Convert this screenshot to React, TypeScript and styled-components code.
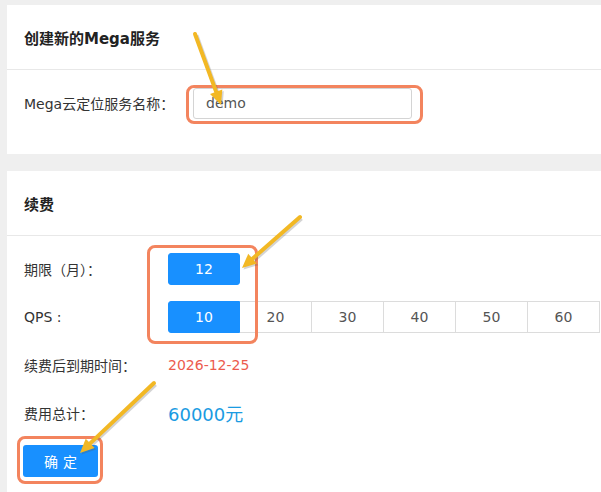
import React from 'react';
import styled, { createGlobalStyle } from 'styled-components';

const GlobalStyle = createGlobalStyle`
  html, body {
    margin: 0;
    padding: 0;
    background: #efefef;
  }
  * {
    box-sizing: border-box;
  }
`;

const FONT = `"DejaVu Sans", "Noto Sans CJK SC", sans-serif`;
const ORANGE = '#f3845e';
const ARROW = '#f2b824';

const Page = styled.div`
  position: relative;
  width: 601px;
  height: 492px;
  overflow: hidden;
  padding: 5px 0 0 7px;
  font-family: ${FONT};
  color: #333;
`;

const Card = styled.section<{ $gap?: number }>`
  width: 700px;
  background: #fff;
  margin-top: ${(p) => p.$gap ?? 0}px;
`;

const CardHeader = styled.header`
  height: 65px;
  display: flex;
  align-items: center;
  padding: 0 17px;
  border-bottom: 1px solid #e8e8e8;
  font-size: 15px;
  font-weight: 700;
  color: #222;
`;

const CardBody = styled.div<{ $bottom: number }>`
  padding: 17px 17px ${(p) => p.$bottom}px;
  display: flex;
  flex-direction: column;
  gap: 16px;
`;

const FormRow = styled.div`
  display: flex;
  align-items: center;
  min-height: 32px;
`;

const Label = styled.span<{ $width: number }>`
  width: ${(p) => p.$width}px;
  flex-shrink: 0;
  font-size: 14px;
  color: #333;
`;

const TextInput = styled.input`
  width: 219px;
  height: 31px;
  border: 1px solid #d4d4d4;
  border-radius: 3px;
  padding: 0 12px;
  font-family: ${FONT};
  font-size: 14px;
  color: #555;
  outline: none;
  background: #fff;
`;

const OptionGroup = styled.div`
  display: flex;
`;

const Option = styled.button<{ $active?: boolean; $single?: boolean }>`
  width: 72px;
  height: 32px;
  flex-shrink: 0;
  font-family: ${FONT};
  font-size: 14px;
  cursor: pointer;
  padding: 0;
  color: ${(p) => (p.$active ? '#fff' : '#555')};
  background: ${(p) => (p.$active ? '#1890ff' : '#fff')};
  border: 1px solid ${(p) => (p.$active ? '#1890ff' : '#dcdcdc')};
  border-left-width: ${(p) => (p.$active || p.$single ? 1 : 0)}px;
  border-radius: ${(p) => (p.$single ? '3px' : p.$active ? '3px 0 0 3px' : '0')};
`;

const DateValue = styled.span`
  font-size: 14px;
  color: #ec5b4e;
`;

const Price = styled.span`
  font-size: 18px;
  color: #1a9be2;
`;

const ConfirmButton = styled.button`
  width: 75px;
  height: 32px;
  margin-left: -1px;
  border: none;
  border-radius: 3px;
  background: #1890ff;
  color: #fff;
  font-family: ${FONT};
  font-size: 14px;
  letter-spacing: 5px;
  text-indent: 5px;
  cursor: pointer;
`;

const Highlight = styled.div`
  position: absolute;
  border: 3px solid ${ORANGE};
  border-radius: 8px;
  pointer-events: none;
`;

const Overlay = styled.svg`
  position: absolute;
  left: 0;
  top: 0;
  pointer-events: none;
`;

type Pt = [number, number];

const arrowHead = (tail: Pt, tip: Pt, len = 14, half = 6.5) => {
  const dx = tip[0] - tail[0];
  const dy = tip[1] - tail[1];
  const d = Math.hypot(dx, dy);
  const ux = dx / d;
  const uy = dy / d;
  const bx = tip[0] - ux * len;
  const by = tip[1] - uy * len;
  return {
    base: [bx, by] as Pt,
    points: `${tip[0]},${tip[1]} ${bx - uy * half},${by + ux * half} ${bx + uy * half},${by - ux * half}`,
  };
};

const Arrow: React.FC<{ tail: Pt; tip: Pt }> = ({ tail, tip }) => {
  const head = arrowHead(tail, tip);
  return (
    <g>
      <g transform="translate(1.5,1.5)" opacity="0.25">
        <line x1={tail[0]} y1={tail[1]} x2={head.base[0]} y2={head.base[1]} stroke="#555" strokeWidth="4" />
        <polygon points={head.points} fill="#555" />
      </g>
      <line x1={tail[0]} y1={tail[1]} x2={head.base[0]} y2={head.base[1]} stroke={ARROW} strokeWidth="4" strokeLinecap="round" />
      <polygon points={head.points} fill={ARROW} />
    </g>
  );
};

const qpsOptions = [10, 20, 30, 40, 50, 60];

const App: React.FC = () => {
  return (
    <Page>
      <GlobalStyle />
      <Card>
        <CardHeader>创建新的Mega服务</CardHeader>
        <CardBody $bottom={35}>
          <FormRow>
            <Label $width={169}>Mega云定位服务名称：</Label>
            <TextInput defaultValue="demo" readOnly />
          </FormRow>
        </CardBody>
      </Card>

      <Card $gap={17}>
        <CardHeader>续费</CardHeader>
        <CardBody $bottom={20}>
          <FormRow>
            <Label $width={144}>期限（月）：</Label>
            <Option $active $single>12</Option>
          </FormRow>
          <FormRow>
            <Label $width={144}>QPS :</Label>
            <OptionGroup>
              {qpsOptions.map((q, i) => (
                <Option key={q} $active={i === 0}>
                  {q}
                </Option>
              ))}
            </OptionGroup>
          </FormRow>
          <FormRow>
            <Label $width={144}>续费后到期时间：</Label>
            <DateValue>2026-12-25</DateValue>
          </FormRow>
          <FormRow>
            <Label $width={144}>费用总计：</Label>
            <Price>60000元</Price>
          </FormRow>
          <FormRow>
            <ConfirmButton>确定</ConfirmButton>
          </FormRow>
        </CardBody>
      </Card>

      <Highlight style={{ left: 186, top: 85, width: 237, height: 39 }} />
      <Highlight style={{ left: 147, top: 245, width: 111, height: 99 }} />
      <Highlight style={{ left: 17, top: 436, width: 86, height: 48 }} />

      <Overlay width="601" height="492" viewBox="0 0 601 492">
        <Arrow tail={[195, 34]} tip={[221, 105]} />
        <Arrow tail={[300, 217]} tip={[242, 268]} />
        <Arrow tail={[154, 383]} tip={[80, 453]} />
      </Overlay>
    </Page>
  );
};

export default App;
